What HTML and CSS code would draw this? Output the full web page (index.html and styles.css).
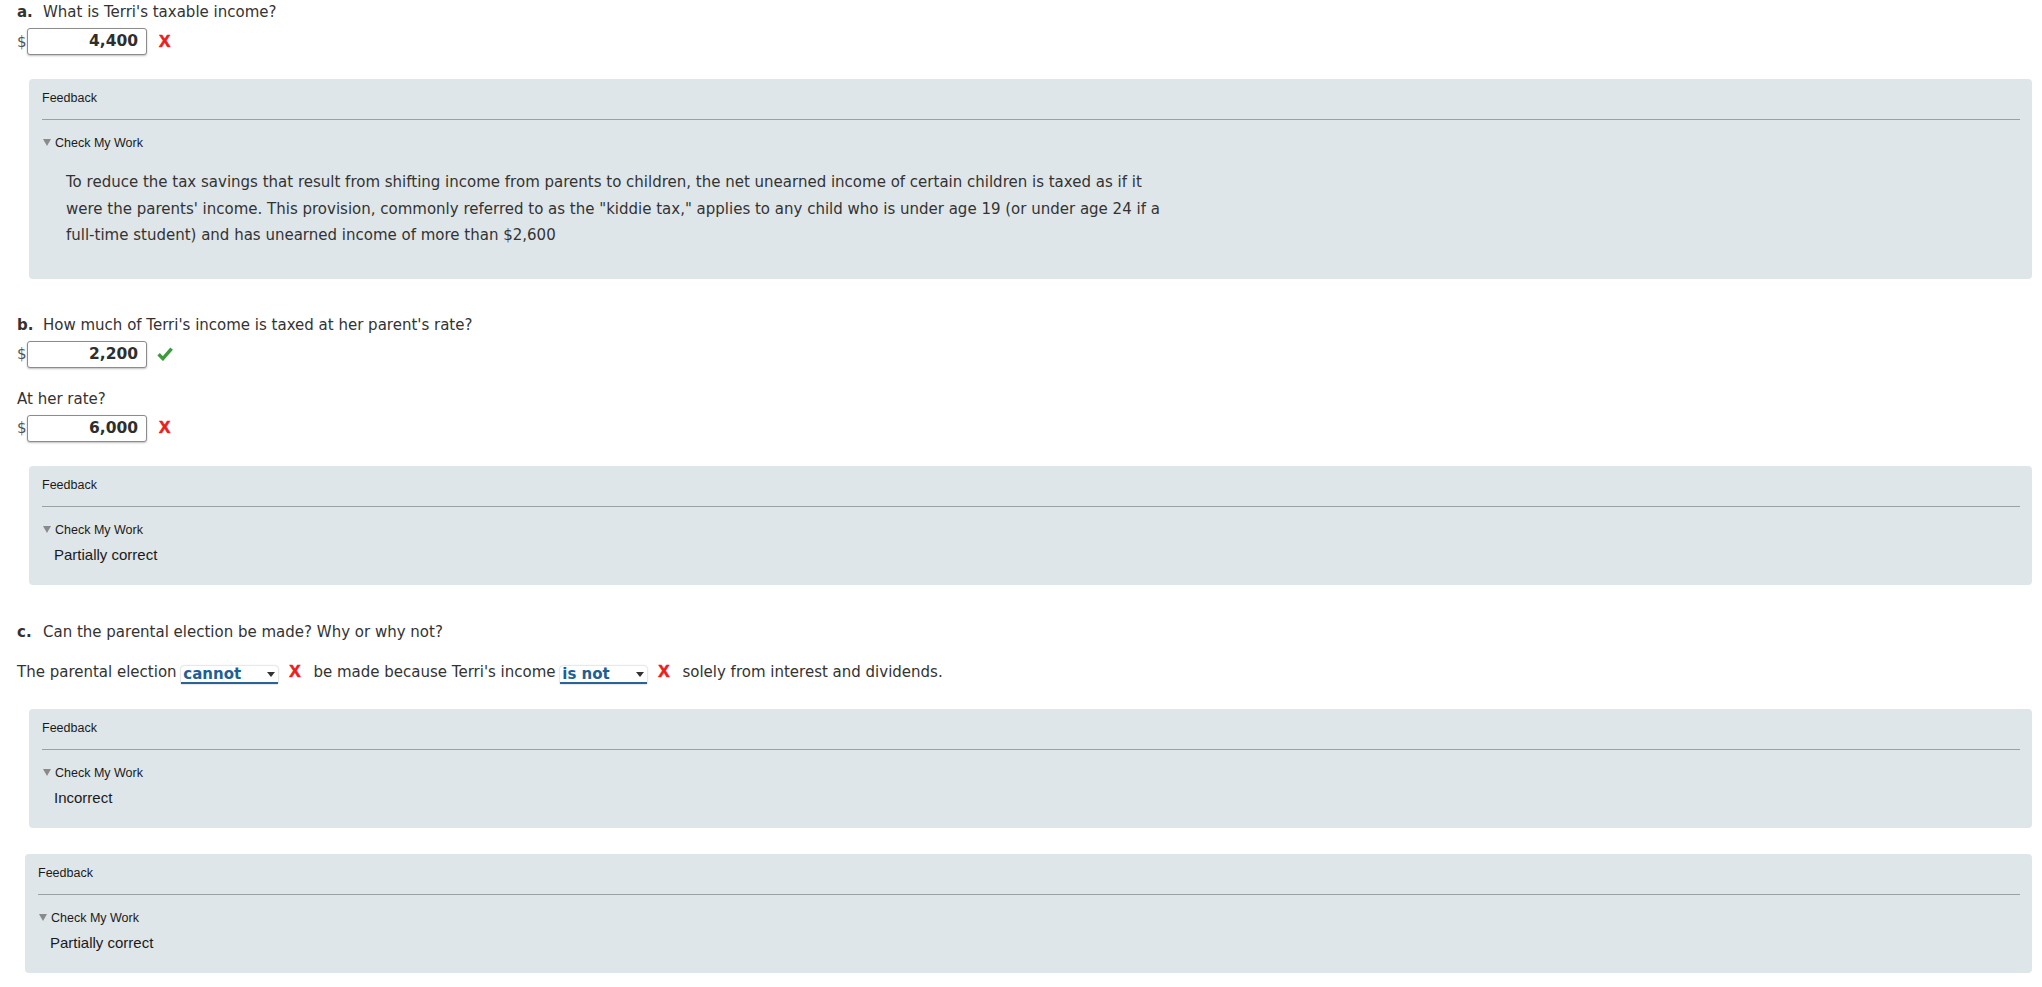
FILE: index.html
```html
<!DOCTYPE html>
<html lang="en">

<head>
    <meta charset="UTF-8">
    <meta name="viewport" content="width=device-width, initial-scale=1.0">
    <title>Kiddie Tax</title>
    <link rel="stylesheet" href="styles.css">
</head>

<body>
    <div class="page">

        <!-- PARTE A -->
        <div class="question q-first">
            <span class="q-label">a.</span>What is Terri's taxable income?
        </div>
        <div class="answer-row">
            <span class="dollar">$</span>
            <span class="answer-input">4,400</span>
            <span class="mark-wrong">X</span>
        </div>
        <div class="feedback">
            <div class="feedback-title">Feedback</div>
            <div class="feedback-line"></div>
            <div class="check-work"><span class="triangle"></span>Check My Work</div>
            <p class="feedback-para">To reduce the tax savings that result from shifting income from parents to children, the net unearned income of certain children is taxed as if it were the parents' income. This provision, commonly referred to as the "kiddie tax," applies to any child who is under age 19 (or under age 24 if a full-time student) and has unearned income of more than $2,600</p>
        </div>

        <!-- PARTE B -->
        <div class="question">
            <span class="q-label">b.</span>How much of Terri's income is taxed at her parent's rate?
        </div>
        <div class="answer-row">
            <span class="dollar">$</span>
            <span class="answer-input">2,200</span>
            <svg class="mark-right" width="16" height="14" viewBox="0 0 16 14">
                <path d="M1.6 7.2 L5.9 11.6 L14.6 1.6" fill="none" stroke="#3d9a3d" stroke-width="3.4" stroke-linejoin="miter"/>
            </svg>
        </div>
        <div class="sub-question">At her rate?</div>
        <div class="answer-row">
            <span class="dollar">$</span>
            <span class="answer-input">6,000</span>
            <span class="mark-wrong">X</span>
        </div>
        <div class="feedback">
            <div class="feedback-title">Feedback</div>
            <div class="feedback-line"></div>
            <div class="check-work"><span class="triangle"></span>Check My Work</div>
            <div class="feedback-result">Partially correct</div>
        </div>

        <!-- PARTE C -->
        <div class="question q-c">
            <span class="q-label">c.</span>Can the parental election be made? Why or why not?
        </div>
        <div class="sentence">The parental election <span class="dropdown dd-cannot">cannot<span class="dd-arrow"></span></span><span class="mark-wrong mark-inline">X</span> be made because Terri's income <span class="dropdown dd-isnot">is not<span class="dd-arrow"></span></span><span class="mark-wrong mark-inline">X</span> solely from interest and dividends.</div>
        <div class="feedback feedback-c">
            <div class="feedback-title">Feedback</div>
            <div class="feedback-line"></div>
            <div class="check-work"><span class="triangle"></span>Check My Work</div>
            <div class="feedback-result">Incorrect</div>
        </div>

        <div class="feedback feedback-total">
            <div class="feedback-title">Feedback</div>
            <div class="feedback-line"></div>
            <div class="check-work"><span class="triangle"></span>Check My Work</div>
            <div class="feedback-result">Partially correct</div>
        </div>

    </div>
</body>

</html>
```

FILE: styles.css
```css
body {
    margin: 0;
    background-color: #fff;
    font-family: "DejaVu Sans", Verdana, sans-serif;
    font-size: 15px;
    color: #333;
}

.page {
    padding: 2px 10px 14px 17px;
}

.question {
    line-height: 20px;
    margin-top: 36px;
}

.q-first {
    margin-top: 0;
}

.q-c {
    margin-top: 37px;
}

.q-label {
    display: inline-block;
    width: 26px;
    font-weight: bold;
}

.sub-question {
    line-height: 20px;
    margin-top: 21px;
}

.answer-row {
    display: flex;
    align-items: center;
    margin-top: 6px;
    height: 27px;
}

.dollar {
    width: 10px;
    color: #555;
}

.answer-input {
    box-sizing: border-box;
    width: 120px;
    height: 27px;
    line-height: 25px;
    padding-right: 8px;
    text-align: right;
    font-weight: bold;
    font-size: 15.5px;
    color: #2e2e2e;
    background-color: #fff;
    border: 1px solid #8c8c8c;
    border-radius: 3px;
    box-shadow: 0 1px 2px rgba(0, 0, 0, 0.25);
}

.mark-wrong {
    margin-left: 12px;
    font-family: "Liberation Sans", Arial, sans-serif;
    font-weight: bold;
    font-size: 17px;
    color: #ee1c1c;
    -webkit-text-stroke: 0.6px #ee1c1c;
}

.mark-right {
    margin-left: 10px;
}

.feedback {
    margin: 24px 0 0 12px;
    padding: 10px 12px 20px 13px;
    background-color: #dfe6e9;
    border-radius: 4px;
    font-family: "Liberation Sans", Arial, sans-serif;
    color: #1a1a1a;
}

.feedback-title {
    font-size: 12.5px;
    line-height: 19px;
}

.feedback-line {
    margin-top: 11px;
    border-top: 1px solid #9aa1a4;
}

.check-work {
    margin-top: 14px;
    font-size: 12.5px;
    line-height: 18px;
}

.triangle {
    display: inline-block;
    margin: 0 4px 0 1px;
    border-left: 4px solid transparent;
    border-right: 4px solid transparent;
    border-top: 7px solid #8a8a8a;
    vertical-align: 1px;
}

.feedback-result {
    margin: 6px 0 0 12px;
    font-size: 15px;
    line-height: 20px;
}

.feedback-para {
    width: 1115px;
    margin: 17px 0 10px 24px;
    font-family: "DejaVu Sans", Verdana, sans-serif;
    font-size: 15px;
    line-height: 26.5px;
    color: #333;
}

.sentence {
    line-height: 20px;
    margin-top: 20px;
}

.dropdown {
    position: relative;
    display: inline-block;
    box-sizing: border-box;
    height: 18px;
    line-height: 16px;
    padding-left: 2px;
    vertical-align: -2px;
    font-weight: bold;
    color: #1d5f96;
    background-color: #fff;
    border-radius: 3px 3px 0 0;
    border-bottom: 2px solid #2a6496;
    box-shadow: 0 0 2px rgba(0, 0, 0, 0.35);
}

.dd-cannot {
    width: 97px;
}

.dd-isnot {
    width: 87px;
}

.dd-arrow {
    position: absolute;
    right: 3px;
    top: 6px;
    border-left: 4px solid transparent;
    border-right: 4px solid transparent;
    border-top: 5px solid #333;
}

.mark-inline {
    margin: 0 8px 0 11px;
}

.feedback-c {
    margin-top: 25px;
}

.feedback-total {
    margin: 26px 0 0 8px;
}
```
